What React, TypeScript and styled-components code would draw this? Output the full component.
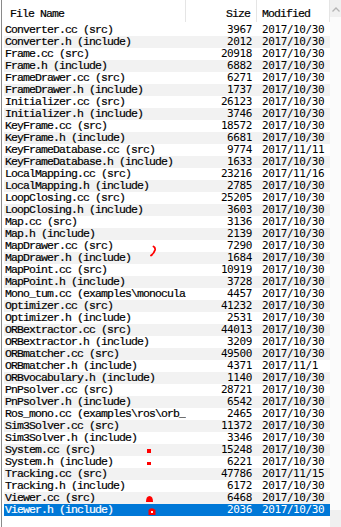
import styled, { createGlobalStyle } from 'styled-components'

const GlobalStyle = createGlobalStyle`
	html, body {
		margin: 0;
		padding: 0;
		background: #ffffff;
	}
	body {
		width: 341px;
		height: 527px;
		overflow: hidden;
	}
`

type FileRow = [string, string, string]

// names as far as the narrow Name column shows them
const files: FileRow[] = [
	['Converter.cc (src)', '3967', '2017/10/30'],
	['Converter.h (include)', '2012', '2017/10/30'],
	['Frame.cc (src)', '20918', '2017/10/30'],
	['Frame.h (include)', '6882', '2017/10/30'],
	['FrameDrawer.cc (src)', '6271', '2017/10/30'],
	['FrameDrawer.h (include)', '1737', '2017/10/30'],
	['Initializer.cc (src)', '26123', '2017/10/30'],
	['Initializer.h (include)', '3746', '2017/10/30'],
	['KeyFrame.cc (src)', '18572', '2017/10/30'],
	['KeyFrame.h (include)', '6681', '2017/10/30'],
	['KeyFrameDatabase.cc (src)', '9774', '2017/11/11'],
	['KeyFrameDatabase.h (include)', '1633', '2017/10/30'],
	['LocalMapping.cc (src)', '23216', '2017/11/16'],
	['LocalMapping.h (include)', '2785', '2017/10/30'],
	['LoopClosing.cc (src)', '25205', '2017/10/30'],
	['LoopClosing.h (include)', '3603', '2017/10/30'],
	['Map.cc (src)', '3136', '2017/10/30'],
	['Map.h (include)', '2139', '2017/10/30'],
	['MapDrawer.cc (src)', '7290', '2017/10/30'],
	['MapDrawer.h (include)', '1684', '2017/10/30'],
	['MapPoint.cc (src)', '10919', '2017/10/30'],
	['MapPoint.h (include)', '3728', '2017/10/30'],
	['Mono_tum.cc (examples\\monocula', '4457', '2017/10/30'],
	['Optimizer.cc (src)', '41232', '2017/10/30'],
	['Optimizer.h (include)', '2531', '2017/10/30'],
	['ORBextractor.cc (src)', '44013', '2017/10/30'],
	['ORBextractor.h (include)', '3209', '2017/10/30'],
	['ORBmatcher.cc (src)', '49500', '2017/10/30'],
	['ORBmatcher.h (include)', '4371', '2017/11/1'],
	['ORBvocabulary.h (include)', '1140', '2017/10/30'],
	['PnPsolver.cc (src)', '28721', '2017/10/30'],
	['PnPsolver.h (include)', '6542', '2017/10/30'],
	['Ros_mono.cc (examples\\ros\\orb_', '2465', '2017/10/30'],
	['Sim3Solver.cc (src)', '11372', '2017/10/30'],
	['Sim3Solver.h (include)', '3346', '2017/10/30'],
	['System.cc (src)', '15248', '2017/10/30'],
	['System.h (include)', '6221', '2017/10/30'],
	['Tracking.cc (src)', '47786', '2017/11/15'],
	['Tracking.h (include)', '6172', '2017/10/30'],
	['Viewer.cc (src)', '6468', '2017/10/30'],
	['Viewer.h (include)', '2036', '2017/10/30'],
]

const selectedIndex = files.length - 1

const nameFont = `
	font-family: "Liberation Mono", "DejaVu Sans Mono", monospace;
	font-size: 11.5px;
	letter-spacing: -0.9px;
	-webkit-text-stroke: 0.2px currentColor;
`
const numberFont = `
	font-family: "DejaVu Sans Mono", "Liberation Mono", monospace;
	font-size: 11px;
	letter-spacing: -0.4px;
`

const Window = styled.div`
	position: relative;
	display: flex;
	width: 341px;
	height: 527px;
	background: #ffffff;
	color: #000000;
`
const ListPane = styled.div`
	display: flex;
	flex-direction: column;
	width: 328px;
	margin-left: 1px;
	border-left: 1px solid #8a8a8a;
`
const Header = styled.div`
	display: grid;
	grid-template-columns: 184px 71px 73px;
	height: 22px;
	margin-bottom: 2px;
`
const HeaderCell = styled.div<{ $align?: 'left' | 'right' }>`
	${nameFont}
	display: flex;
	align-items: center;
	justify-content: ${({ $align }) => ($align === 'right' ? 'flex-end' : 'flex-start')};
	padding: 5px ${({ $align }) => ($align === 'right' ? '6px' : '0')} 0
		${({ $align }) => ($align === 'right' ? '0' : '5px')};
	border-right: 1px solid #e5e5e5;
	white-space: nowrap;
`
const NameHeader = styled(HeaderCell)`
	padding-left: 8px;
`
const Rows = styled.div`
	display: flex;
	flex-direction: column;
	margin-left: 2px;
`
const Row = styled.div<{ $striped: boolean; $selected: boolean }>`
	display: grid;
	grid-template-columns: 182px 71px 73px;
	height: 12px;
	line-height: 12px;
	background: ${({ $selected, $striped }) =>
		$selected ? '#0078d7' : $striped ? '#f2f2f2' : '#ffffff'};
	color: ${({ $selected }) => ($selected ? '#ffffff' : '#000000')};
`
const NameCell = styled.div`
	${nameFont}
	padding-left: 1px;
	overflow: hidden;
	white-space: nowrap;
`
const SizeCell = styled.div`
	${numberFont}
	text-align: right;
	padding-right: 5px;
	overflow: hidden;
	white-space: nowrap;
`
const DateCell = styled.div`
	${numberFont}
	padding-left: 5px;
	overflow: hidden;
	white-space: nowrap;
`
const ScrollBar = styled.div`
	display: flex;
	flex-direction: column;
	flex: 1;
	background: #fbfbfb;
`
const ScrollButton = styled.div`
	display: flex;
	justify-content: center;
	padding-top: 7px;
	height: 17px;
	box-sizing: border-box;
	background: #f0f0f0;
`
const ScrollTrack = styled.div`
	flex: 1;
`
const Marks = styled.svg`
	position: absolute;
	left: 0;
	top: 0;
	pointer-events: none;
`

const App: React.FC = () => {
	return (
		<>
			<GlobalStyle />
			<Window>
				<ListPane>
					<Header>
						<NameHeader>File Name</NameHeader>
						<HeaderCell $align='right'>Size</HeaderCell>
						<HeaderCell>Modified</HeaderCell>
					</Header>
					<Rows>
						{files.map(([name, size, date], i) => (
							<Row key={name} $striped={i % 2 === 1} $selected={i === selectedIndex}>
								<NameCell>{name}</NameCell>
								<SizeCell>{size}</SizeCell>
								<DateCell>{date}</DateCell>
							</Row>
						))}
					</Rows>
				</ListPane>
				<ScrollBar>
					<ScrollButton>
						<svg width='8' height='5' viewBox='0 0 8 5'>
							<path d='M0.5 4.5 L4 1 L7.5 4.5' fill='none' stroke='#b4b4b4' strokeWidth='1.3' />
						</svg>
					</ScrollButton>
					<ScrollTrack />
					<ScrollButton />
				</ScrollBar>
				{/* red pen marks drawn over the list */}
				<Marks width='341' height='527' viewBox='0 0 341 527'>
					<path
						d='M153.5 246.5 Q155.5 247.5 155 250 Q154 253.5 151 255.5'
						fill='none'
						stroke='#ff0000'
						strokeWidth='1.8'
						strokeLinecap='round'
					/>
					<rect x='147' y='449' width='4' height='4' fill='#ff0000' />
					<rect x='147' y='462' width='4' height='3' fill='#ff0000' />
					<path d='M146 502 Q146 496 149.5 496 Q153 496 153 502 Z' fill='#ff0000' />
					<path d='M148.5 515 L148.5 510 Q150.5 507.5 153 508.5 L155.5 510 L155.5 515 Z' fill='#ff0000' />
					<rect x='151' y='511' width='2' height='2' fill='#ffffff' />
				</Marks>
			</Window>
		</>
	)
}

export default App
